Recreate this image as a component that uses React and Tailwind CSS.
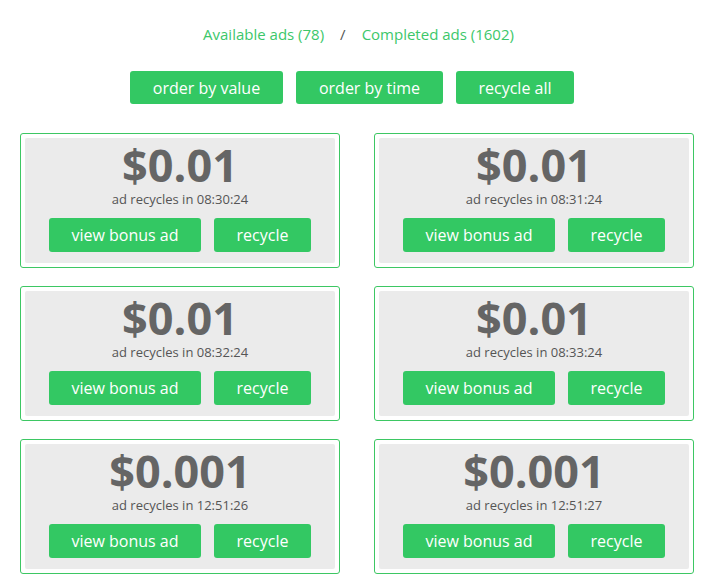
import React from 'react';

const ads = [
  { value: '$0.01', time: '08:30:24' },
  { value: '$0.01', time: '08:31:24' },
  { value: '$0.01', time: '08:32:24' },
  { value: '$0.01', time: '08:33:24' },
  { value: '$0.001', time: '12:51:26' },
  { value: '$0.001', time: '12:51:27' },
];

const AdCard = ({ value, time }) => (
  <div className="border border-[#3dc763] rounded-[3px] p-[4px] bg-white">
    <div className="bg-[#ebebeb] rounded-[2px] pt-[3px] pb-[11px] flex flex-col items-center">
      <div className="text-[45px] leading-[48px] font-bold text-[#656565]">{value}</div>
      <div className="mt-[2px] text-[13px] leading-[16px] text-[#555]">
        ad recycles in {time}
      </div>
      <div className="mt-[11px] flex gap-[13px]">
        <button className="w-[152px] h-[34px] rounded-[3px] bg-[#33c863] text-white text-[16px]">view bonus ad</button>
        <button className="w-[97px] h-[34px] rounded-[3px] bg-[#33c863] text-white text-[16px]">recycle</button>
      </div>
    </div>
  </div>
);

export default function App() {
  return (
    <div className="w-[714px] min-h-[582px] bg-white px-[20px] pt-[24px]" style={{ fontFamily: '"Open Sans", sans-serif' }}>
      <div className="flex justify-center items-center text-[15px] leading-[20px] pl-[3px]">
        <span className="text-[#3cc76a]">Available ads (78)</span>
        <span className="mx-[16px] text-[#555]">/</span>
        <span className="text-[#3cc76a]">Completed ads (1602)</span>
      </div>
      <div className="mt-[27px] flex justify-center gap-[13px] pr-[10px]">
        <button className="w-[153px] h-[33px] rounded-[3px] bg-[#33c863] text-white text-[16px]">order by value</button>
        <button className="w-[147px] h-[33px] rounded-[3px] bg-[#33c863] text-white text-[16px]">order by time</button>
        <button className="w-[118px] h-[33px] rounded-[3px] bg-[#33c863] text-white text-[16px]">recycle all</button>
      </div>
      <div className="mt-[29px] grid grid-cols-2 gap-x-[34px] gap-y-[18px]">
        {ads.map((ad, i) => (
          <AdCard key={i} {...ad} />
        ))}
      </div>
    </div>
  );
}
